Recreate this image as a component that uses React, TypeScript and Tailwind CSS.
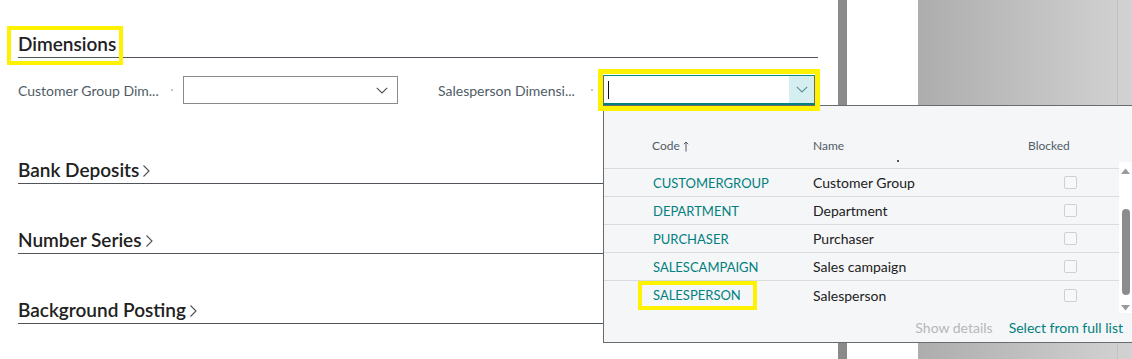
import { ReactNode } from "react";

const rows = [
  { code: "CUSTOMERGROUP", name: "Customer Group" },
  { code: "DEPARTMENT", name: "Department" },
  { code: "PURCHASER", name: "Purchaser" },
  { code: "SALESCAMPAIGN", name: "Sales campaign" },
  { code: "SALESPERSON", name: "Salesperson" },
];

const ChevronRight = () => (
  <svg width="9" height="14" viewBox="0 0 9 14" fill="none" className="mt-[2px]">
    <polyline points="1.5,1.5 7,7 1.5,12.5" stroke="#505050" strokeWidth="1.1" />
  </svg>
);

const ChevronDown = ({ color = "#505050" }: { color?: string }) => (
  <svg width="12" height="7" viewBox="0 0 12 7" fill="none">
    <polyline points="0.8,0.8 6,6 11.2,0.8" stroke={color} strokeWidth="1.1" />
  </svg>
);

const Section = ({ title, first }: { title: string; first?: boolean }) => (
  <div className={first ? "mt-[54px]" : "mt-[45px]"}>
    <div className="flex items-center gap-[3px] text-[19px] font-semibold leading-[22px] pb-[2px] border-b border-[#50555c] text-[#212121]">
      <span>{title}</span>
      <ChevronRight />
    </div>
  </div>
);

const Field = ({ label, children }: { label: string; children: ReactNode }) => (
  <div className="flex items-center">
    <span className="w-[153px] text-[14px] text-[#505c66] whitespace-nowrap overflow-hidden">{label}</span>
    <span className="w-[2px] h-[2px] bg-[#c4c4c4] mr-[10px]" />
    {children}
  </div>
);

export default function App() {
  return (
    <div className="relative w-[1132px] h-[359px] overflow-hidden flex bg-white font-['Lato',sans-serif]">
      {/* Main page */}
      <div className="w-[838px] pl-[18px] pr-[20px] pt-[33px] flex flex-col">
        <div className="relative">
          <h2 className="text-[19px] font-semibold leading-[22px] pb-[2px] border-b border-[#50555c] text-[#212121]">
            Dimensions
          </h2>
          <div className="absolute -left-[11px] -top-[7px] w-[116px] h-[39px] border-[4px] border-[#fff200] pointer-events-none" />
        </div>

        <div className="mt-[17px] h-[30px] flex items-center gap-[40px]">
          <Field label="Customer Group Dim...">
            <div className="w-[215px] h-[28px] border border-[#8a8a8a] bg-white flex items-center justify-end pr-[9px]">
              <ChevronDown />
            </div>
          </Field>
          <Field label="Salesperson Dimensi...">
            <div className="relative z-20 w-[212px] h-[30px] border border-[#6b6b6b] border-t-[#0a8a86] border-b-2 border-b-[#00807e] bg-white flex">
              <div className="flex-1 flex items-center pl-[4px]">
                <span className="w-[1px] h-[18px] bg-[#111]" />
              </div>
              <div className="w-[25px] bg-[#d5eef0] flex items-center justify-center">
                <ChevronDown color="#5a8d9a" />
              </div>
              <div className="absolute -left-[6px] -top-[7px] -right-[6px] -bottom-[8px] border-[5px] border-[#fff200] pointer-events-none" />
            </div>
          </Field>
        </div>

        <Section title="Bank Deposits" first />
        <Section title="Number Series" />
        <Section title="Background Posting" />
      </div>

      {/* Right side backdrop */}
      <div className="w-[9px] bg-[#8a8a8a]" />
      <div className="w-[71px] bg-white" />
      <div className="flex-1 flex">
        <div className="w-[199px] bg-linear-to-r from-[#adadad] to-[#d0d0d0]" />
        <div className="w-[1px] bg-[#c2c2c2]" />
        <div className="flex-1 bg-[#d1d1d1]" />
      </div>

      {/* Lookup dropdown */}
      <div className="absolute z-10 left-[603px] top-[105px] w-[531px] h-[238px] border border-[#6b6b6b] bg-[#f5f6f8] flex flex-col">
        <div className="flex">
          <div className="w-[515px]">
            <div className="flex pt-[32px] pb-[14px] border-b border-[#d8dbe0] text-[12px] leading-[16px] text-[#505c66]">
              <div className="w-[209px] pl-[48px] flex items-center gap-[3px]">
                Code
                <svg width="6" height="11" viewBox="0 0 6 11" fill="none">
                  <path d="M3 10.5V1M0.8 3.2L3 1l2.2 2.2" stroke="#505c66" strokeWidth="1" />
                </svg>
              </div>
              <div className="relative w-[215px]">
                Name
                <span className="absolute left-[84px] top-[22px] w-[2px] h-[2px] bg-[#555]" />
              </div>
              <div>Blocked</div>
            </div>
            {rows.map((r, i) => (
              <div
                key={r.code}
                className={`flex items-center h-[28px] text-[14px] ${i < rows.length - 1 ? "border-b border-[#d8dbe0]" : ""}`}
              >
                <div className="relative w-[209px] pl-[49px] pt-[2px] text-[13px] text-[#00807e]">
                  {r.code}
                  {r.code === "SALESPERSON" && (
                    <div className="absolute left-[34px] -top-[3px] w-[119px] h-[29px] border-[4px] border-[#fff200] pointer-events-none" />
                  )}
                </div>
                <div className="w-[215px] text-[#212121]">{r.name}</div>
                <div className="pl-[36px]">
                  <div className="w-[13px] h-[13px] border border-[#cdd0d4] rounded-[2px] bg-[#f8f8f9]" />
                </div>
              </div>
            ))}
          </div>
          <div className="mt-[56px] w-[13px] h-[151px] bg-white flex flex-col items-center">
            <svg width="9" height="6" viewBox="0 0 9 6" className="mt-[6px]">
              <polygon points="0,6 4.5,0.5 9,6" fill="#9a9a9a" />
            </svg>
            <div className="mt-[35px] w-[8px] h-[86px] rounded-full bg-[#8c8c8c]" />
            <svg width="9" height="6" viewBox="0 0 9 6" className="mt-[10px]">
              <polygon points="0,0 4.5,5.5 9,0" fill="#9a9a9a" />
            </svg>
          </div>
        </div>
        <div className="mt-[5px] flex justify-end gap-[16px] pr-[10px] text-[14px] leading-[20px]">
          <span className="text-[#b5b8bb]">Show details</span>
          <span className="text-[#00807e]">Select from full list</span>
        </div>
      </div>
    </div>
  );
}
